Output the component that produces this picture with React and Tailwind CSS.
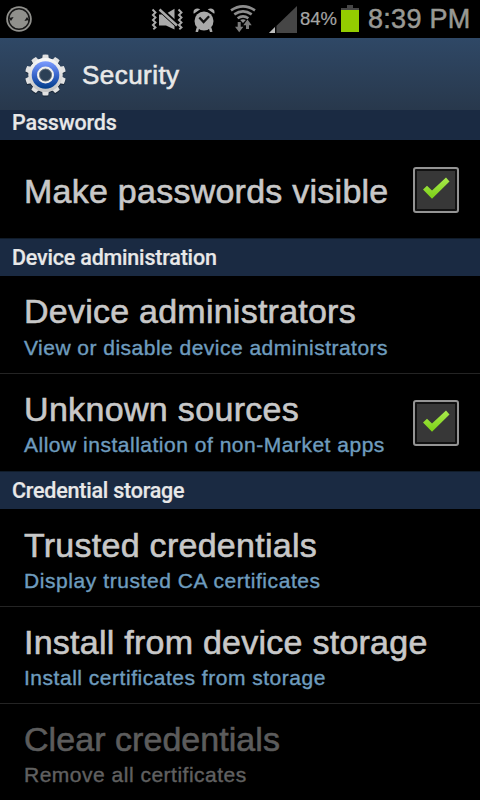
import React from "react";

const sans = "font-['Liberation_Sans',Arial,sans-serif]";

function SyncIcon() {
  return (
    <svg className="ml-[6px] h-[26px] w-[26px] shrink-0" viewBox="0 0 26 26" fill="none">
      <circle cx="13" cy="13" r="12.8" fill="#90908c" />
      <circle cx="13" cy="13" r="10.300" stroke="#161616" strokeWidth="1.500" />
      <path d="M1.800 10.500l2.300 1.200 3.500-.8-2.600 4zM24.200 15.500l-2.300-1.200-3.500.8 2.600-4z" fill="#161616" />
    </svg>
  );
}

function VibrateIcon() {
  return (
    <svg className="h-[24px] w-[33px] shrink-0" viewBox="0 0 33 24" fill="none">
      <path d="M1.500 2.500l3 3-2.600 2.500 2.600 2.500-2.600 2.500 2.600 2.500-2.600 2.500 2.600 2.500-2.200 1.800M27.500 2.500l3 3-2.600 2.500 2.600 2.500-2.600 2.500 2.600 2.500-2.600 2.500 2.600 2.500-2.200 1.800" stroke="#aaaaaa" strokeWidth="1.900" />
      <path d="M8 7.500H11L23.500 19V22.500L15 18.500H8zM15.500 6.500l8-4.800v11.500z" fill="#aaaaaa" />
      <path d="M9 2 26 17.500" stroke="#000" strokeWidth="4.800" />
      <path d="M8.500 2.500 26 18.500" stroke="#aaaaaa" strokeWidth="2.500" />
    </svg>
  );
}

function AlarmIcon() {
  return (
    <svg className="ml-[9px] h-[25px] w-[22px] shrink-0" viewBox="0 0 22 25">
      <circle cx="11" cy="14" r="9.500" fill="#aaaaaa" />
      <path d="M.8 6.800C-.7 3 3 .3 7.300 2.300zM21.200 6.800C22.700 3 19 .3 14.700 2.300z" fill="#aaaaaa" />
      <path d="M5 20.500 3.700 25M17 20.500l1.300 4.500" stroke="#aaaaaa" strokeWidth="2.600" />
      <path d="M6.300 10.500l4.300 4.600 5.500-5.800" fill="none" stroke="#111" strokeWidth="2.300" />
    </svg>
  );
}

function WifiIcon() {
  return (
    <svg className="ml-[15px] h-[28px] w-[26px] shrink-0" viewBox="0 0 26 28" fill="none">
      <path d="M1 5.400Q13-2.600 25 5.400M4.300 9.400Q13 3.400 21.700 9.400M7.600 13.200Q13 9.400 18.400 13.200" stroke="#8d8d8d" strokeWidth="2.600" />
      <path d="M10.200 15Q13 13.300 15.800 15L13 18z" fill="#8d8d8d" />
      <path d="M9.200 17v6M17.500 18v6" stroke="#7b7b7b" strokeWidth="3" />
      <path d="M5 21.700h8.400L9.200 27.300zM13.300 20.200h8.400l-4.200-5.600z" fill="#7b7b7b" />
    </svg>
  );
}

function SignalIcon() {
  return (
    <svg className="ml-[13px] h-[27px] w-[28px] shrink-0" viewBox="0 0 28 27">
      <path d="M0 27 28 0v27z" fill="#464646" />
      <path d="M0 27 6 21v6z" fill="#bdbdbd" />
      <path d="M6 21l1.500-1.500V27H6z" fill="#0a0a0a" />
    </svg>
  );
}

function BatteryIcon() {
  return (
    <svg className="ml-[5px] h-[27px] w-[18px] shrink-0 -translate-y-px" viewBox="0 0 18 27">
      <path d="M6 0h6v3h6v3H0V3h6z" fill="#464646" />
      <path d="M0 5h18v22H0z" fill="#93cc00" />
    </svg>
  );
}

const teeth = [0, 36, 72, 108, 144, 180, 216, 252, 288, 324];

function GearShape() {
  return (
    <>
      <circle cx="21.500" cy="21" r="17" />
      {teeth.map((a) => (
        <path key={a} d="M18 6 18.700 .8Q21.500 .3 24.300 .8L25 6z" transform={`rotate(${a} 21.500 21)`} />
      ))}
    </>
  );
}

function GearIcon() {
  return (
    <svg className="ml-6 h-[44px] w-[42px] shrink-0 translate-y-[2px]" viewBox="0 0 42 44">
      <defs>
        <linearGradient id="metal" gradientUnits="userSpaceOnUse" x1="0" y1="0" x2="0" y2="42">
          <stop offset="0" stopColor="#ffffff" />
          <stop offset="1" stopColor="#bcbcbc" />
        </linearGradient>
        <linearGradient id="blue" x1="0" y1="0" x2="0" y2="1">
          <stop offset="0" stopColor="#7d9cff" />
          <stop offset=".5" stopColor="#3a66cc" />
          <stop offset="1" stopColor="#003c88" />
        </linearGradient>
      </defs>
      <g fill="#17212e" opacity=".65" transform="translate(0 1.3)"><GearShape /></g>
      <g fill="#e2e2e2"><GearShape /></g>
      <circle cx="21.500" cy="21" r="17" fill="url(#metal)" />
      <circle cx="21.500" cy="21" r="13.800" fill="url(#blue)" />
      <circle cx="21.500" cy="21" r="7.400" fill="#2c4056" stroke="#f2f0ec" strokeWidth="2.200" />
      <circle cx="21.500" cy="21" r="6" fill="none" stroke="#77808a" strokeWidth=".8" />
    </svg>
  );
}

function CheckBox({ className }) {
  return (
    <span className={`mr-[21px] flex h-[46px] w-[46px] shrink-0 items-center justify-center rounded-[3px] border-2 border-[#949494] bg-[#111111] ${className}`}>
      <svg className="h-[38px] w-[38px] bg-[#373737]" viewBox="0 0 38 38">
        <defs>
          <linearGradient id="check" x1="0" y1="0" x2="0" y2="1">
            <stop offset="0" stopColor="#a9ea4d" />
            <stop offset="1" stopColor="#7bd016" />
          </linearGradient>
        </defs>
        <path d="M6 18.500 10 14.700 15 19.500 29 6.500 32.500 10.500 15 27.700z" fill="url(#check)" />
      </svg>
    </span>
  );
}

function Section({ children, spacing, first }) {
  return (
    <h2
      className={`${first ? "h-[30px] leading-[26px]" : "h-[38px] border-t border-[#101c2a] leading-[38px]"} shrink-0 bg-[#1a2a42] pl-3 font-['Roboto',sans-serif] text-[21.5px] font-medium whitespace-nowrap text-[#e8e8e8] [-webkit-text-stroke:0.2px] ${spacing}`}
    >
      {children}
    </h2>
  );
}

function Row({ title, titleSpacing, sub, subSpacing, checked, disabled, divider, height, pad = "pt-[3px]", gap = "mt-[3px]", boxClass = "" }) {
  return (
    <div className={`flex shrink-0 items-center justify-between pl-6 ${height} ${divider ? "border-b border-[#242424]" : ""}`}>
      <div className={`${sans} ${pad} whitespace-nowrap`}>
        <div className={`text-[34px] leading-[40px] [-webkit-text-stroke:0.6px] ${titleSpacing} ${disabled ? "text-[#5c5c5c]" : "text-[#c8c8c8]"}`}>{title}</div>
        {sub && (
          <div className={`${gap} text-[21px] leading-[26px] [-webkit-text-stroke:0.4px] ${subSpacing} ${disabled ? "text-[#606060]" : "text-[#6e9cbe]"}`}>{sub}</div>
        )}
      </div>
      {checked && <CheckBox className={boxClass} />}
    </div>
  );
}

export default function App() {
  return (
    <div className="flex h-[800px] w-[480px] flex-col overflow-hidden bg-black">
      <div className={`flex h-[38px] shrink-0 items-center ${sans}`}>
        <SyncIcon />
        <div className="ml-[119px] flex items-center">
          <VibrateIcon />
          <AlarmIcon />
          <WifiIcon />
          <SignalIcon />
          <span className="ml-[3px] w-[36px] text-[18.5px] leading-none whitespace-nowrap text-[#a5a5a5] [-webkit-text-stroke:0.2px]">84%</span>
          <BatteryIcon />
          <span className="ml-[9px] text-[27px] leading-none tracking-[0.3px] whitespace-nowrap text-[#999994] [-webkit-text-stroke:0.5px]">8:39 PM</span>
        </div>
      </div>
      <header className="flex h-[72px] shrink-0 items-center bg-linear-to-b from-[#2f4866] to-[#28384c]">
        <GearIcon />
        <h1 className={`ml-4 pt-[2px] text-[26px] leading-none tracking-[0.45px] text-[#e8e8e8] [-webkit-text-stroke:0.6px] ${sans}`}>Security</h1>
      </header>
      <Section first spacing="tracking-[-0.15px]">Passwords</Section>
      <Row height="h-[98px]" title="Make passwords visible" titleSpacing="tracking-[0.25px]" checked pad="pt-[4px]" boxClass="translate-y-px" />
      <Section spacing="tracking-[-0.2px]">Device administration</Section>
      <Row height="h-[98px]" divider title="Device administrators" titleSpacing="tracking-[0.24px]" sub="View or disable device administrators" subSpacing="tracking-[0.48px]" pad="pt-[2px]" gap="mt-[4px]" />
      <Row height="h-[97px]" title="Unknown sources" titleSpacing="tracking-[0.33px]" sub="Allow installation of non-Market apps" subSpacing="tracking-[0.51px]" checked pad="pt-px" />
      <Section spacing="tracking-[-0.22px]">Credential storage</Section>
      <Row height="h-[98px]" divider title="Trusted credentials" titleSpacing="tracking-[0.27px]" sub="Display trusted CA certificates" subSpacing="tracking-[0.57px]" />
      <Row height="h-[97px]" divider title="Install from device storage" titleSpacing="tracking-[0.25px]" sub="Install certificates from storage" subSpacing="tracking-[0.52px]" />
      <Row height="h-[97px]" disabled title="Clear credentials" titleSpacing="tracking-[0.05px]" sub="Remove all certificates" subSpacing="tracking-[0.5px]" pad="pt-px" />
    </div>
  );
}
